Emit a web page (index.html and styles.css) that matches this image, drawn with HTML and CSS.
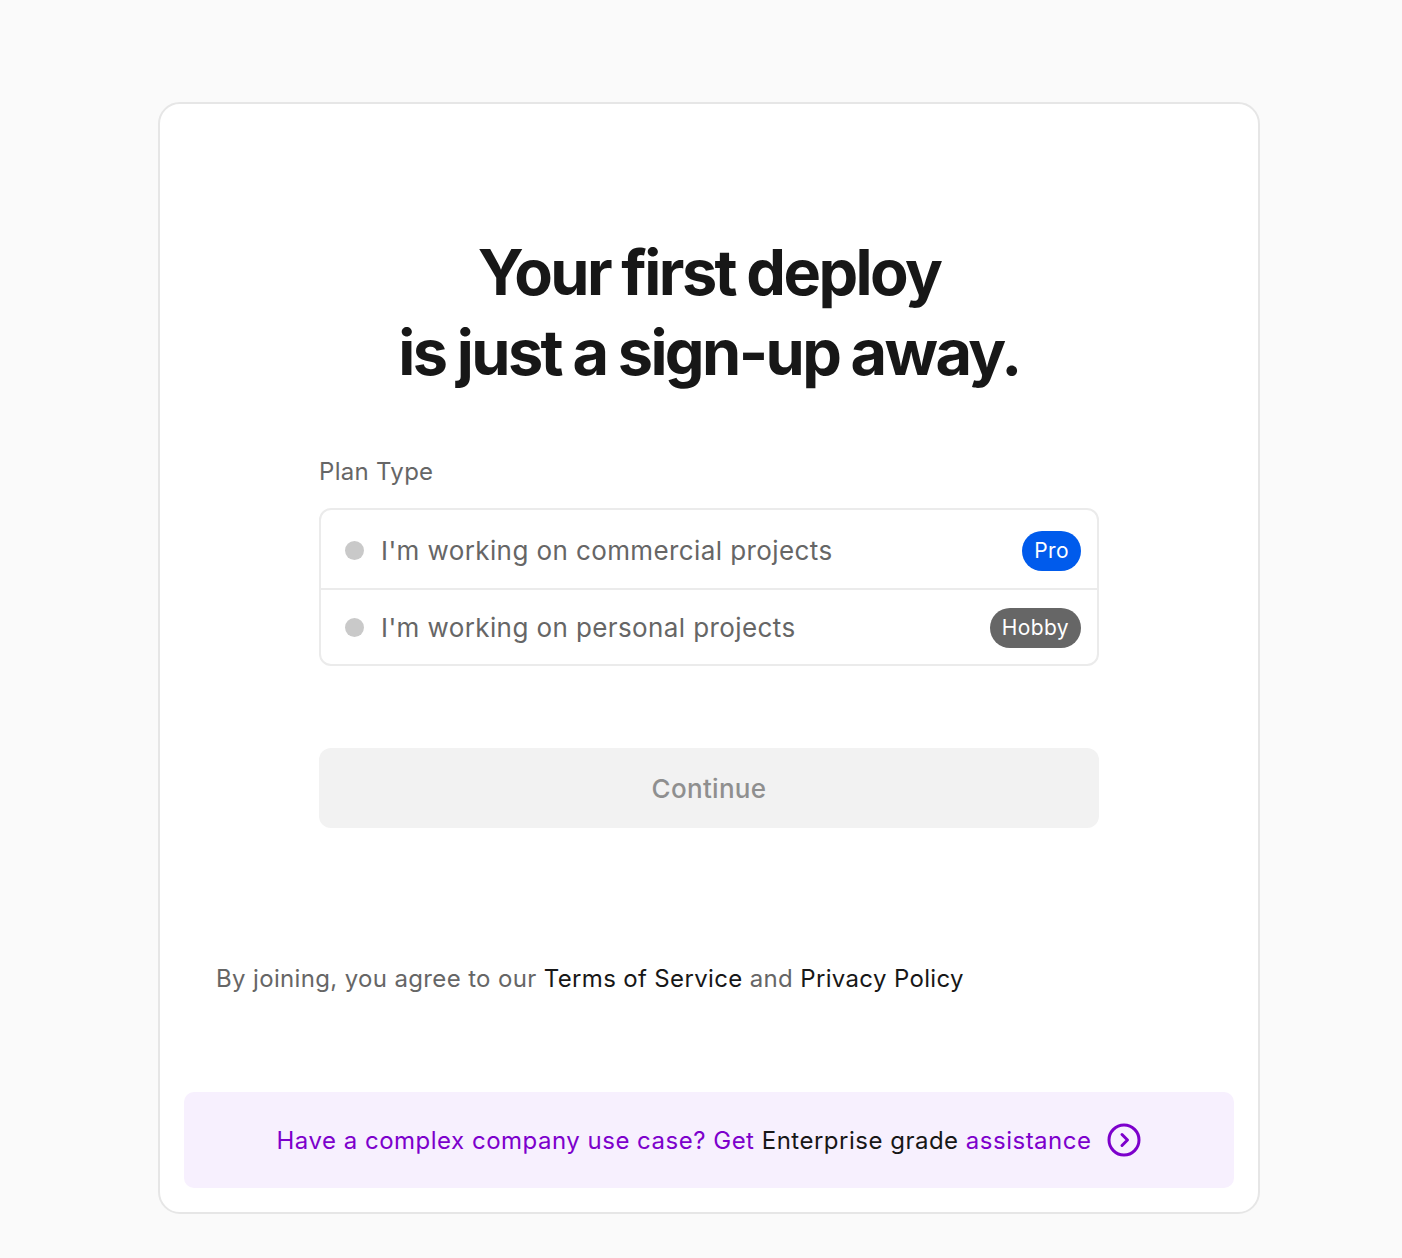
FILE: index.html
```html
<!DOCTYPE html>
<html lang="en">
<head>
  <meta charset="UTF-8" />
  <meta name="viewport" content="width=device-width, initial-scale=1.0" />
  <title>Sign Up</title>
  <link rel="stylesheet" href="styles.css">
</head>
<body>
  <div class="card">
    <h1 class="title">Your first deploy<br/>is just a sign-up away.</h1>

    <div class="form">
      <label class="label">Plan Type</label>
      <div class="options">
        <div class="option">
          <span class="dot"></span>
          <span class="option-text">I'm working on commercial projects</span>
          <span class="badge badge-pro">Pro</span>
        </div>
        <div class="option">
          <span class="dot"></span>
          <span class="option-text">I'm working on personal projects</span>
          <span class="badge badge-hobby">Hobby</span>
        </div>
      </div>

      <button class="continue" disabled>Continue</button>
    </div>

    <p class="terms">By joining, you agree to our <a href="#">Terms of Service</a> and <a href="#">Privacy Policy</a></p>

    <div class="enterprise">
      <span>Have a complex company use case? Get <strong>Enterprise grade</strong> assistance</span>
      <svg class="arrow" width="34" height="34" viewBox="0 0 34 34" fill="none">
        <circle cx="17" cy="17" r="15" stroke="#7d00cc" stroke-width="3"/>
        <path d="M15 11.5l5.5 5.5-5.5 5.5" stroke="#7d00cc" stroke-width="3" stroke-linecap="round" stroke-linejoin="round"/>
      </svg>
    </div>
  </div>
</body>
</html>
```

FILE: styles.css
```css
body { margin: 0; background: #fafafa; font-family: Inter, "Noto Sans", sans-serif; color: #171717; }
.card { width: 1102px; box-sizing: border-box; margin: 102px 0 44px 158px; background: white; border: 2px solid #e6e6e6; border-radius: 22px; padding: 128px 0 24px; }
.title { margin: 0; text-align: center; font-size: 63px; line-height: 80px; font-weight: 700; letter-spacing: -2.6px; word-spacing: -1px; color: #171717; }

.form { width: 780px; margin: 64px auto 0; }
.label { display: block; font-size: 24px; line-height: 32px; letter-spacing: 0.3px; color: #666; margin-bottom: 20px; }
.options { border: 2px solid #ebebeb; border-radius: 12px; }
.option { display: flex; align-items: center; box-sizing: border-box; height: 78px; padding: 3px 16px 0 24px; }
.option + .option { border-top: 2px solid #ebebeb; height: 76px; padding-top: 1px; }
.dot { width: 19px; height: 19px; border-radius: 50%; background: #c9c9c9; margin-right: 17px; }
.option-text { flex: 1; font-size: 26px; letter-spacing: 0.4px; color: #666; }
.badge { height: 40px; line-height: 40px; padding: 0 12px; border-radius: 20px; color: white; font-size: 21px; letter-spacing: 0.4px; }
.badge-pro { background: #005bec; }
.badge-hobby { background: #666; }

.continue { display: block; width: 100%; height: 80px; margin-top: 82px; border: none; border-radius: 12px; background: #f2f2f2; color: #8f8f8f; font-family: inherit; font-size: 26px; font-weight: 500; letter-spacing: 0.3px; }

.terms { margin: 135px 0 0 56px; font-size: 24px; line-height: 32px; letter-spacing: 0.35px; color: #666; }
.terms a { color: #171717; text-decoration: none; }

.enterprise { display: flex; align-items: center; justify-content: center; gap: 16px; height: 96px; margin: 97px 24px 0; background: #f7f0fe; border-radius: 10px; font-size: 24px; letter-spacing: 0.5px; color: #7d00cc; }
.enterprise strong { font-weight: 400; color: #171717; }
```
